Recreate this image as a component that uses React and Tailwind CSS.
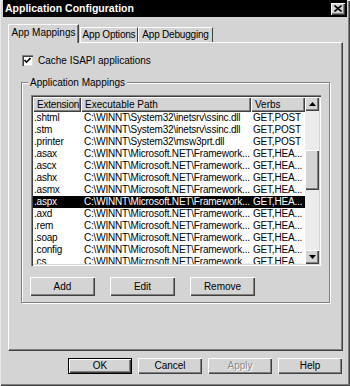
import React from "react";

const raised =
  "bg-[#d4d4d4] shadow-[inset_1px_1px_0_#ffffff,inset_-1px_-1px_0_#404040,inset_-2px_-2px_0_#808080]";

const rows = [
  [".shtml", "C:\\WINNT\\System32\\inetsrv\\ssinc.dll", "GET,POST"],
  [".stm", "C:\\WINNT\\System32\\inetsrv\\ssinc.dll", "GET,POST"],
  [".printer", "C:\\WINNT\\System32\\msw3prt.dll", "GET,POST"],
  [".asax", "C:\\WINNT\\Microsoft.NET\\Framework...", "GET,HEA..."],
  [".ascx", "C:\\WINNT\\Microsoft.NET\\Framework...", "GET,HEA..."],
  [".ashx", "C:\\WINNT\\Microsoft.NET\\Framework...", "GET,HEA..."],
  [".asmx", "C:\\WINNT\\Microsoft.NET\\Framework...", "GET,HEA..."],
  [".aspx", "C:\\WINNT\\Microsoft.NET\\Framework...", "GET,HEA..."],
  [".axd", "C:\\WINNT\\Microsoft.NET\\Framework...", "GET,HEA..."],
  [".rem", "C:\\WINNT\\Microsoft.NET\\Framework...", "GET,HEA..."],
  [".soap", "C:\\WINNT\\Microsoft.NET\\Framework...", "GET,HEA..."],
  [".config", "C:\\WINNT\\Microsoft.NET\\Framework...", "GET,HEA..."],
  [".cs", "C:\\WINNT\\Microsoft.NET\\Framework...", "GET,HEA..."],
];

function Button({ children, className = "", disabled, isDefault }) {
  return (
    <button
      type="button"
      className={`${raised} flex items-center justify-center ${
        isDefault ? "border border-black" : ""
      } ${
        disabled ? "text-[#8a8a8a] [text-shadow:1px_1px_0_#ffffff]" : "text-black"
      } ${className}`}
    >
      {children}
    </button>
  );
}

function Arrow({ down }) {
  return (
    <svg width="7" height="4" viewBox="0 0 7 4">
      <polygon points={down ? "0,0 7,0 3.5,4" : "0,4 7,4 3.5,0"} fill="#000" />
    </svg>
  );
}

export default function App() {
  return (
    <div className="w-[350px] h-[386px] bg-[#d4d4d4] px-[3px] font-['Liberation_Sans',Arial,sans-serif] text-[10px] leading-none text-black shadow-[inset_1px_1px_0_#e8e8e8,inset_-1px_-1px_0_#404040,inset_-2px_-2px_0_#808080] overflow-hidden">
      {/* title bar */}
      <div className="h-[17px] bg-black flex items-center justify-between pl-[2px] pr-[2px]">
        <span className="text-white font-bold text-[10.5px]">Application Configuration</span>
        <button type="button" className={`${raised} w-[14px] h-[12px] flex items-center justify-center`}>
          <svg width="8" height="7" viewBox="0 0 8 7">
            <path d="M0.5 0.5 L7.5 6.5 M7.5 0.5 L0.5 6.5" stroke="#000" strokeWidth="1.6" />
          </svg>
        </button>
      </div>

      <div className="pl-[5px] pt-[8px]">
        {/* tabs */}
        <div className="flex items-end h-[17px]">
          <div className="relative z-10 w-[71px] h-[19px] -mb-px bg-[#d4d4d4] border-t border-l border-white border-r border-r-[#404040] shadow-[inset_-1px_0_0_#808080] flex items-center justify-center pb-[2px]">
            App Mappings
          </div>
          <div className="w-[58px] h-[15px] ml-[1px] border-t border-l border-white border-r border-r-[#404040] flex items-center justify-center tracking-[-0.2px]">
            App Options
          </div>
          <div className="w-[75px] h-[15px] border-t border-l border-white border-r border-r-[#404040] flex items-center justify-center tracking-[-0.2px]">
            App Debugging
          </div>
        </div>

        {/* tab panel */}
        <div className="w-[335px] h-[309px] border-t border-l border-white border-r border-r-[#404040] border-b border-b-[#404040] shadow-[inset_-1px_-1px_0_#808080] pl-[13px] pt-[12px]">
          <div className="flex items-center gap-[5px] h-[11px]">
            <div className="w-[11px] h-[11px] bg-white shadow-[inset_1px_1px_0_#808080,inset_2px_2px_0_#404040,inset_-1px_-1px_0_#e0e0e0] flex items-center justify-center">
              <svg width="7" height="7" viewBox="0 0 7 7">
                <path d="M0.5 3 L2.5 5.2 L6.5 1" stroke="#000" strokeWidth="1.6" fill="none" />
              </svg>
            </div>
            <span>Cache ISAPI applications</span>
          </div>

          {/* group box */}
          <div className="relative mt-[16px] -ml-[1px] w-[309px] h-[221px] border border-[#808080] shadow-[1px_1px_0_#ffffff,inset_1px_1px_0_#ffffff] pl-[9px] pt-[12px]">
            <span className="absolute -top-[6px] left-[6px] bg-[#d4d4d4] px-[2px] leading-[12px]">
              Application Mappings
            </span>

            {/* list view */}
            <div className="w-[290px] h-[171px] bg-white p-[2px] shadow-[inset_1px_1px_0_#808080,inset_2px_2px_0_#404040,inset_-1px_-1px_0_#ffffff,inset_-2px_-2px_0_#d4d4d4] flex overflow-hidden">
              <div className="w-[272px] flex flex-col overflow-hidden">
                <div className="flex h-[15px] shrink-0">
                  <div className={`${raised} w-[48px] flex items-center pl-[4px] tracking-[-0.2px]`}>Extension</div>
                  <div className={`${raised} w-[170px] flex items-center pl-[4px]`}>Executable Path</div>
                  <div className={`${raised} w-[54px] flex items-center pl-[4px]`}>Verbs</div>
                </div>
                {rows.map(([ext, path, verbs]) => {
                  const sel = ext === ".aspx";
                  return (
                    <div
                      key={ext}
                      className={`flex h-[12px] shrink-0 items-center whitespace-nowrap tracking-[-0.2px] ${
                        sel ? "bg-black text-white" : ""
                      }`}
                    >
                      <span className="w-[48px] pl-[1px]">{ext}</span>
                      <span className="w-[170px] pl-[3px]">{path}</span>
                      <span className="w-[54px] pl-[2px]">{verbs}</span>
                    </div>
                  );
                })}
              </div>

              {/* scrollbar */}
              <div className="w-[14px] flex flex-col bg-[#ececec]">
                <div className={`${raised} h-[14px] shrink-0 flex items-center justify-center`}>
                  <Arrow />
                </div>
                <div className="flex-1 pt-[39px]">
                  <div className={`${raised} h-[40px]`} />
                </div>
                <div className={`${raised} h-[14px] shrink-0 flex items-center justify-center`}>
                  <Arrow down />
                </div>
              </div>
            </div>

            <div className="flex mt-[11px] -ml-[1px] gap-[15px]">
              <Button className="w-[65px] h-[19px]">Add</Button>
              <Button className="w-[65px] h-[19px]">Edit</Button>
              <Button className="w-[65px] h-[19px]">Remove</Button>
            </div>
          </div>
        </div>

        {/* dialog buttons */}
        <div className="flex gap-[6px] mt-[7px] pl-[60px]">
          <Button isDefault className="w-[64px] h-[16px]">OK</Button>
          <Button className="w-[64px] h-[16px]">Cancel</Button>
          <Button disabled className="w-[64px] h-[16px]">Apply</Button>
          <Button className="w-[64px] h-[16px]">Help</Button>
        </div>
      </div>
    </div>
  );
}
